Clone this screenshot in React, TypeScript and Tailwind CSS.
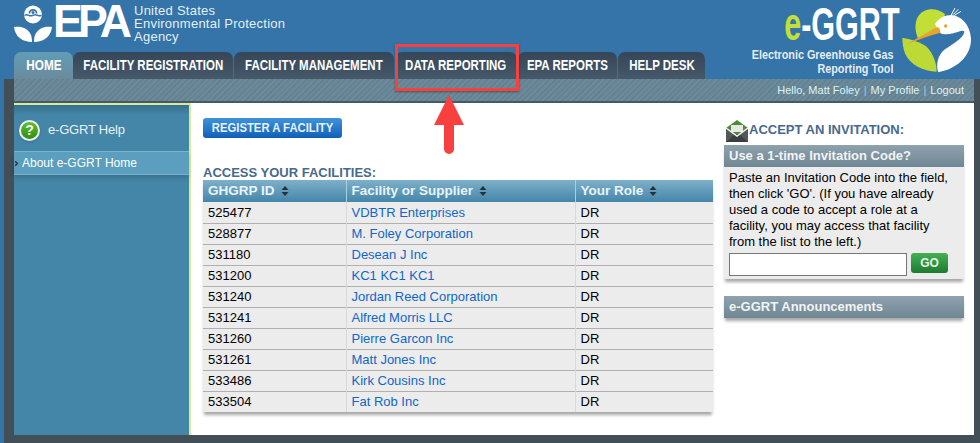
import { ChevronRight } from 'lucide-react';

const facilities = [
  ['525477', 'VDBTR Enterprises'],
  ['528877', 'M. Foley Corporation'],
  ['531180', 'Desean J Inc'],
  ['531200', 'KC1 KC1 KC1'],
  ['531240', 'Jordan Reed Corporation'],
  ['531241', 'Alfred Morris LLC'],
  ['531260', 'Pierre Garcon Inc'],
  ['531261', 'Matt Jones Inc'],
  ['533486', 'Kirk Cousins Inc'],
  ['533504', 'Fat Rob Inc'],
];

const tabs = [
  { label: 'FACILITY REGISTRATION', w: 'w-[160px]' },
  { label: 'FACILITY MANAGEMENT', w: 'w-[160px]' },
  { label: 'DATA REPORTING', w: 'w-[122px]' },
  { label: 'EPA REPORTS', w: 'w-[99px]' },
  { label: 'HELP DESK', w: 'w-[87px]' },
];

function EpaFlower() {
  return (
    <svg width="38" height="38" viewBox="0 0 38 38" className="shrink-0">
      <circle cx="19" cy="10.500" r="9" fill="#fff" />
      <path d="M11 12h16c-.5 2.500-1.500 4-3 5.500H14c-1.500-1.500-2.500-3-3-5.500z" fill="#fff" />
      <path d="M14.500 9.500a4.500 4.500 0 0 1 9 0h-1.800a2.700 2.700 0 0 0-5.400 0z" fill="#3474a8" />
      <circle cx="19" cy="8.500" r="1.500" fill="#3474a8" />
      <path d="M10.500 10.500c1.500-.8 2.500-.8 4 0s2.500.8 4.500 0 3-.8 4.500 0 2.500.8 4 0v1.500c-1.500.8-2.500.8-4 0s-3-.8-4.500 0-3 .8-4.500 0-2.500-.8-4 0z" fill="#3474a8" />
      <path d="M0 23c7-1 13 .5 16.500 7 1 2 1.500 4.500 1.500 8-9 0-17-5-18-15z" fill="#fff" />
      <path d="M38 23c-7-1-13 .5-16.500 7-1 2-1.500 4.500-1.500 8 9 0 17-5 18-15z" fill="#fff" />
    </svg>
  );
}

function EggrtBird() {
  return (
    <svg width="85" height="80" viewBox="0 0 255 240" className="shrink-0">
      <path d="M150 42C125 22 85 22 68 52 58 72 60 95 70 118L140 78z" fill="#c2df38" />
      <path d="M22 113C50 118 80 128 95 140 115 160 125 190 125 215 85 215 45 195 30 160 24 145 22 128 22 113z" fill="#bcd936" />
      <path d="M120 72C130 55 150 45 170 45 200 48 225 75 228 115 230 160 195 205 130 217 122 195 128 165 150 148 175 130 205 115 208 95 205 88 190 95 175 100 155 105 140 103 135 98 130 92 125 82 120 72z" fill="#fff" />
      <path d="M35 133L125 82C130 80 135 85 135 92L137 98C105 105 70 120 35 133z" fill="#e9a22d" />
      <circle cx="152" cy="78" r="5" fill="#e9a22d" />
      <path d="M168 46L180 24M174 44L190 28M178 46L198 34" stroke="#fff" strokeWidth="3" fill="none" />
    </svg>
  );
}

function SortIcon() {
  return (
    <svg width="8" height="10" viewBox="0 0 8 10" className="inline-block ml-[6px] align-[-1px]">
      <path d="M4 0l3.500 4h-7zM4 10L.500 6h7z" fill="#26323a" />
    </svg>
  );
}

function EnvelopeIcon() {
  return (
    <svg width="24" height="26" viewBox="0 0 24 26" className="shrink-0">
      <path d="M1 9l11-8 11 8v11H1z" fill="#4f8a3c" />
      <rect x="6" y="6" width="12" height="7" fill="#e8e8e0" />
      <path d="M1 9l11 8 11-8v14H1z" fill="#55585a" />
      <path d="M1 23l9-8h4l9 8z" fill="#3c3f41" />
      <path d="M1 9l11 8 11-8" fill="none" stroke="#f2f2f2" strokeWidth="1.500" />
    </svg>
  );
}

export default function App() {
  return (
    <div className="relative w-[980px] h-[443px] overflow-hidden bg-[#3474a8] font-['Liberation_Sans',Arial,sans-serif]">
      <div className="flex justify-between h-[52px]">
        <div className="flex pl-[14px] pt-[4px] items-start">
          <EpaFlower />
          <span className="text-white font-bold text-[47px] leading-[34px] tracking-[-5px] ml-[1px] w-[80px] scale-x-[0.95] origin-left whitespace-nowrap">EPA</span>
          <div className="text-[#e6eff5] text-[13px] leading-[13px] tracking-[0.25px] ml-[1px] whitespace-nowrap">
            <div>United States</div>
            <div>Environmental Protection</div>
            <div>Agency</div>
          </div>
        </div>
        <div className="flex items-start">
          <div className="flex flex-col items-end mr-[2px] pt-[4px]">
            <div className="h-[40px] leading-[40px] text-[47px] font-bold whitespace-nowrap scale-x-[0.65] origin-right mr-[-7px]">
              <span className="text-[#c2df38]">e</span>
              <span className="text-white">-GGRT</span>
            </div>
            <div className="text-[#e4edf3] font-bold text-[12px] leading-[14px] text-right mt-[4px] scale-x-[0.9] origin-right whitespace-nowrap">
              <div>Electronic Greenhouse Gas</div>
              <div>Reporting Tool</div>
            </div>
          </div>
          <EggrtBird />
        </div>
      </div>

      <div className="flex pl-[14px] h-[27px]">
        <div className="w-[59px] rounded-t-[7px] flex items-center justify-center bg-gradient-to-b from-[#5f9db5] to-[#6b8a9c] text-white text-[14px] font-bold">
          <span className="scale-x-[0.84] inline-block">HOME</span>
        </div>
        {tabs.map((t, i) => (
          <div key={t.label} className={`${t.w} ${i === 0 ? '' : 'ml-[1px]'} rounded-t-[7px] flex items-center justify-center bg-gradient-to-b from-[#344657] to-[#46596a] text-white text-[14px] font-bold whitespace-nowrap`}>
            <span className="scale-x-[0.82] inline-block">{t.label}</span>
          </div>
        ))}
      </div>

      <div className="ml-[4px] h-[364px] bg-[#434f56] pl-[10px] pr-[6px] pb-[8px] flex flex-col">
        <div className="h-[24px] shrink-0 bg-[#6b8a9c] border-b-[2px] border-[#465a66] bg-[repeating-linear-gradient(135deg,#6b8a9c_0px,#6b8a9c_2px,#64828f_2px,#64828f_4px)] flex items-center justify-end pr-[10px] text-[11px] text-[#dff3f5]">
          Hello, Matt Foley<span className="text-[#9fd0e5] mx-[4px]">|</span>My Profile<span className="text-[#9fd0e5] mx-[4px]">|</span>Logout
        </div>
        <div className="flex-1 flex bg-white min-h-0">
          <aside className="w-[177px] shrink-0 bg-[#4386a8] border-t-[2px] border-r-[2px] border-[#d9ea9a] pt-[13px] bg-[linear-gradient(to_bottom,#37708e_0px,#4386a8_10px)]">
            <div className="flex items-center h-[24px] pl-[5px] text-[13px] tracking-[-0.2px] text-[#e8f1f5]">
              <span className="w-[21px] h-[21px] rounded-full bg-gradient-to-b from-[#5fc12c] to-[#2f8f12] border-[2px] border-[#eef2ee] text-white font-bold text-[14px] flex items-center justify-center shadow">?</span>
              <span className="ml-[8px]">e-GGRT Help</span>
            </div>
            <div className="relative mt-[9px] h-[24px] bg-[#5b9ebd] border-y border-[#78b2cc] flex items-center pl-[8px] text-[12px] text-white shadow-[0_3px_4px_rgba(0,0,0,0.15)]">
              <ChevronRight size={7} strokeWidth={5} className="absolute left-[-1px] top-[8px] text-[#26323a]" />
              About e-GGRT Home
            </div>
          </aside>

          <main className="w-[524px] shrink-0 pl-[12px] pt-[15px]">
            <div className="w-[139px] h-[20px] rounded-[3px] bg-gradient-to-b from-[#3f93dc] to-[#0f5fb8] text-[#e8f3fb] font-bold text-[12px] flex items-center justify-center">
              <span className="scale-x-[0.94] whitespace-nowrap">REGISTER A FACILITY</span>
            </div>
            <h2 className="mt-[27px] text-[#466a8c] font-bold text-[13px] leading-[15px]">ACCESS YOUR FACILITIES:</h2>
            <table className="w-[510px] table-fixed border-collapse text-[13px] text-black shadow-[0_4px_3px_-1px_rgba(0,0,0,0.35)]">
              <thead>
                <tr className="h-[22px] bg-gradient-to-b from-[#7eb0c9] to-[#4386aa] text-[13.5px] text-left">
                  <th className="w-[143px] pl-[5px] font-bold border-r border-[#a9cfe0] text-[#eaf4f8] whitespace-nowrap">GHGRP ID<SortIcon /></th>
                  <th className="w-[229px] pl-[5px] font-bold border-r border-[#a9cfe0] text-[#eaf4f8] whitespace-nowrap">Facility or Supplier<SortIcon /></th>
                  <th className="w-[138px] pl-[5px] font-bold text-[#eaf4f8] whitespace-nowrap">Your Role<SortIcon /></th>
                </tr>
              </thead>
              <tbody>
                {facilities.map(([id, name]) => (
                  <tr key={id} className="h-[21px] bg-[#ececec] border-b border-[#b0b0b0] last:border-b-0">
                    <td className="pl-[5px] border-r border-[#d8d8d8]">{id}</td>
                    <td className="pl-[5px] border-r border-[#d8d8d8] text-[#1166c8]">{name}</td>
                    <td className="pl-[5px]">DR</td>
                  </tr>
                ))}
              </tbody>
            </table>
          </main>

          <section className="w-[240px] shrink-0 pl-[9px] pt-[15px]">
            <div className="flex items-center h-[27px] ml-[1px]">
              <EnvelopeIcon />
              <span className="text-[#466a8c] font-bold text-[13px] mb-[3px] whitespace-nowrap">ACCEPT AN INVITATION:</span>
            </div>
            <div className="w-[240px] shadow-[0_4px_3px_-1px_rgba(0,0,0,0.35)]">
              <div className="h-[22px] bg-gradient-to-b from-[#8fa2ad] to-[#6f8794] text-[#f1f4f5] font-bold text-[13px] flex items-center pl-[5px]">Use a 1-time Invitation Code?</div>
              <div className="bg-[#ececec] px-[5px] pt-[3px] text-[13px] leading-[16px] text-black h-[112px]">
                <p className="whitespace-nowrap">Paste an Invitation Code into the field,<br />then click 'GO'. (If you have already<br />used a code to accept a role at a<br />facility, you may access that facility<br />from the list to the left.)</p>
                <div className="flex items-start mt-[3px]">
                  <input className="w-[178px] h-[23px] bg-white border border-[#777]" />
                  <div className="ml-[4px] w-[37px] h-[20px] rounded-[3px] bg-gradient-to-b from-[#43b152] to-[#1f7a33] text-[#e5f4e6] font-bold text-[12px] flex items-center justify-center">GO</div>
                </div>
              </div>
            </div>
            <div className="mt-[17px] w-[240px] h-[22px] bg-gradient-to-b from-[#8fa2ad] to-[#6f8794] text-[#f1f4f5] font-bold text-[13px] flex items-center pl-[5px] shadow-[0_4px_3px_-1px_rgba(0,0,0,0.35)]">e-GGRT Announcements</div>
          </section>
        </div>
      </div>

      <div className="absolute left-[395px] top-[44px] w-[124px] h-[47px] border-[3px] border-[#f8403f] shadow-[0_1px_2px_rgba(0,0,0,0.35)]" />
      <svg className="absolute left-[434px] top-[95px]" width="30" height="62" viewBox="0 0 30 62">
        <path d="M15 0L30 30H20V54a5 5 0 0 1-10 0V30H0z" fill="#f8403f" />
      </svg>
    </div>
  );
}
